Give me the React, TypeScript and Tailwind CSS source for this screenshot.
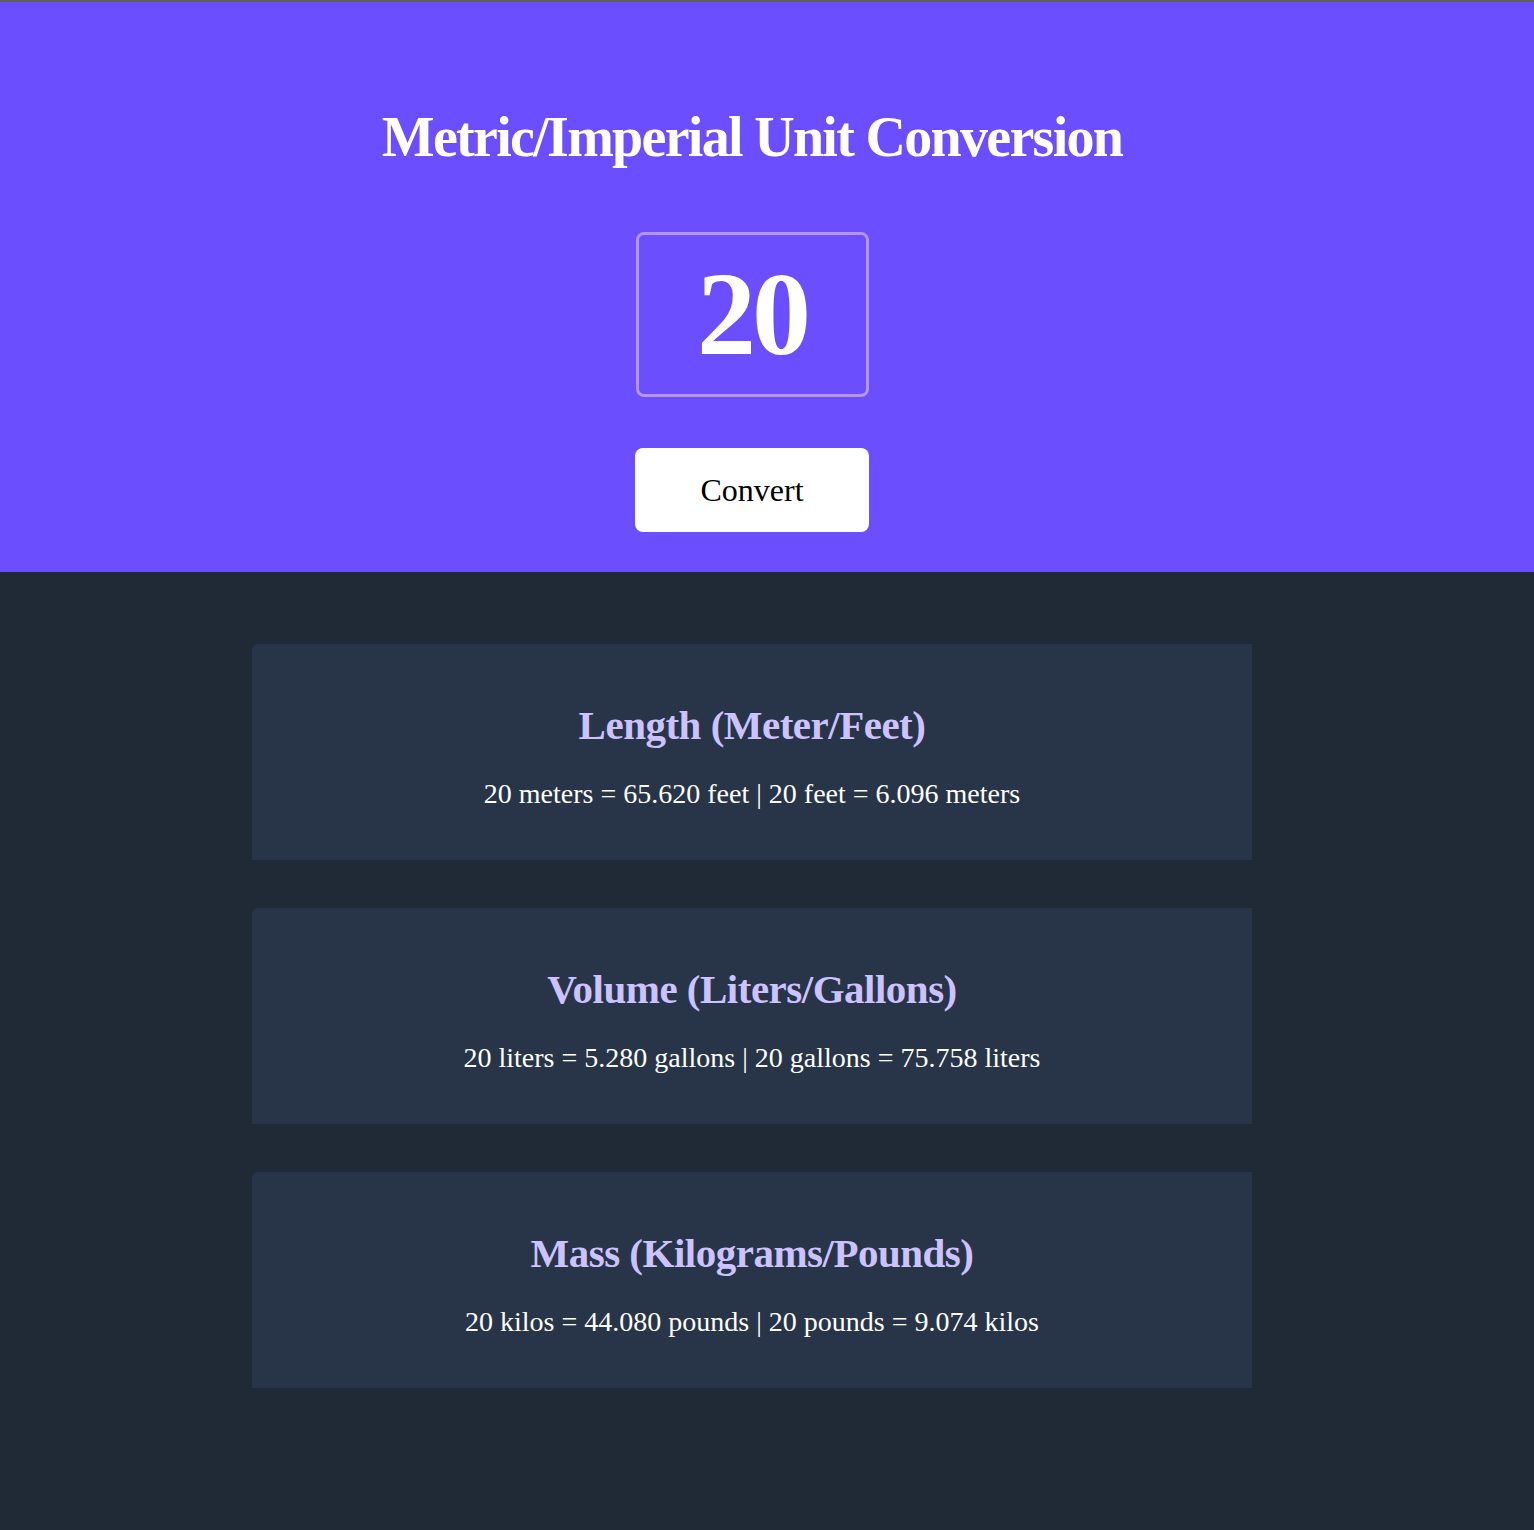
import React from 'react';

const results = [
  { title: 'Length (Meter/Feet)', text: '20 meters = 65.620 feet | 20 feet = 6.096 meters' },
  { title: 'Volume (Liters/Gallons)', text: '20 liters = 5.280 gallons | 20 gallons = 75.758 liters' },
  { title: 'Mass (Kilograms/Pounds)', text: '20 kilos = 44.080 pounds | 20 pounds = 9.074 kilos' },
];

const App: React.FC = () => {
  return (
    <div className="min-h-screen bg-[#1f2a36] font-['Liberation_Serif',serif]">
      <header className="bg-[#6b4efd] border-t-2 border-[#5e5e5e] flex flex-col items-center h-[572px] pr-[30px]">
        <h1 className="mt-[102px] h-[66px] text-white font-bold text-[56px] leading-[66px] tracking-[-1.7px]">
          Metric/Imperial Unit Conversion
        </h1>
        <input
          type="text"
          defaultValue="20"
          className="mt-[62px] w-[233px] h-[165px] border-[3px] border-[#b294fb] rounded-lg bg-transparent text-center text-white font-bold text-[118px] tracking-[-4px] outline-none"
        />
        <button className="mt-[51px] w-[234px] h-[84px] bg-white rounded-lg text-black text-[32px]">
          Convert
        </button>
      </header>

      <main className="flex flex-col items-center gap-12 pt-[72px] pb-[142px] pr-[30px]">
        {results.map((r) => (
          <section
            key={r.title}
            className="w-[1000px] h-[216px] bg-[#283548] rounded-tl-md flex flex-col items-center pt-[58px]"
          >
            <h2 className="text-[#ccc2ff] font-bold text-[41px] leading-[46px] tracking-[-0.5px]">{r.title}</h2>
            <p className="mt-[30px] text-white text-[28px] leading-[32px]">{r.text}</p>
          </section>
        ))}
      </main>
    </div>
  );
};

export default App;
